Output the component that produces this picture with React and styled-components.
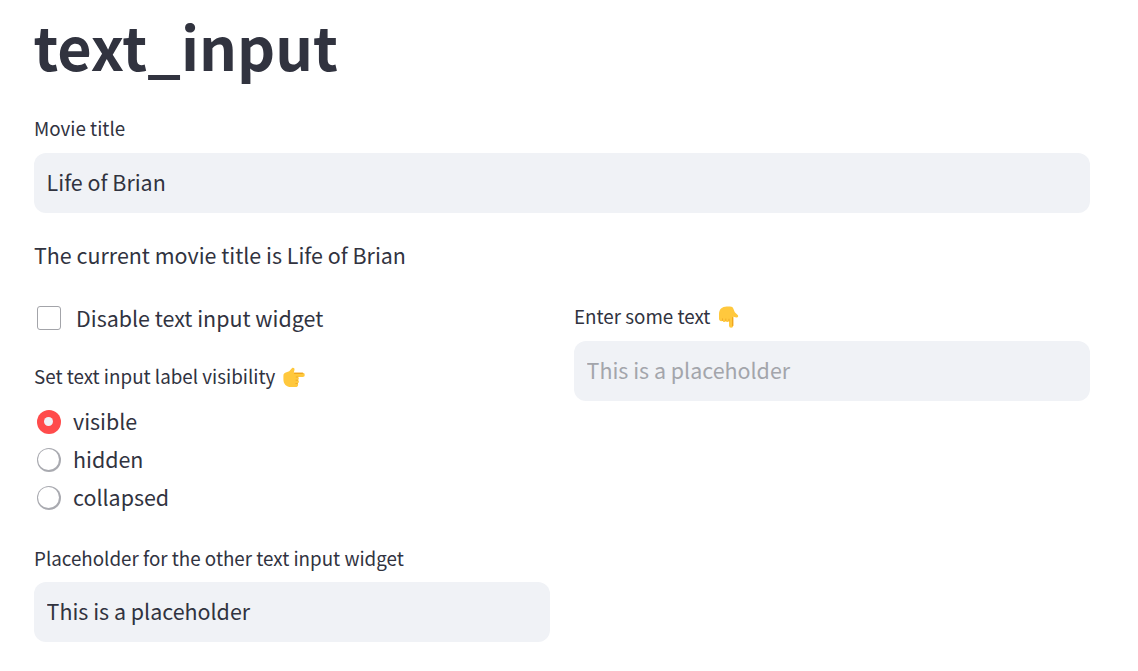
import React from "react";
import styled, { createGlobalStyle } from "styled-components";

const Global = createGlobalStyle`
  * { box-sizing: border-box; }
  body { margin: 0; background: #fff; color: #31333f; font-family: "Noto Sans CJK SC", "Open Sans", sans-serif; }
`;

const Page = styled.main`
  width: 1138px;
  height: 671px;
  overflow: hidden;
  padding: 0 48px 0 34px;
`;
const Title = styled.h1`
  margin: 0 0 0 -0.5px;
  height: 112px;
  padding-top: 5px;
  font-size: 59.3px;
  font-weight: 700;
  line-height: 80px;
`;
const Label = styled.div`
  display: flex;
  align-items: center;
  gap: 8px;
  height: 34px;
  font-size: 18.8px;
  line-height: 30px;
  padding-bottom: ${(p) => (p.$low ? 1 : 3)}px;
  white-space: nowrap;
`;
const Input = styled.input`
  display: block;
  width: 100%;
  height: 60px;
  margin-top: 7px;
  padding: 0 12.6px 3px;
  border: 0;
  border-radius: 12px;
  background: #f0f2f6;
  color: #31333f;
  font: 21.45px "Noto Sans CJK SC", sans-serif;
  &::placeholder { color: #a3a5ab; opacity: 1; }
`;
const Text = styled.p`
  margin: 23px 0 0;
  font-size: 21.45px;
  line-height: 38px;
`;
const Columns = styled.div`
  display: grid;
  grid-template-columns: 516px 516px;
  gap: 24px;
  margin-top: 26px;
`;
const Option = styled.label`
  display: flex;
  align-items: center;
  gap: ${(p) => p.$gap}px;
  height: 38px;
  padding-left: 3px;
  font-size: 21.45px;
  line-height: 36px;
`;
const OptionText = styled.span`
  padding-bottom: 2px;
`;
const Box = styled.span`
  width: 24px;
  height: 24px;
  margin-bottom: 2px;
  border: 1px solid #a3a4a9;
  border-radius: 3px;
`;
const Radio = styled.span`
  display: flex;
  width: 24px;
  height: 24px;
  padding: ${(p) => (p.$on ? "7px" : "1px")};
  border-radius: 50%;
  background: ${(p) => (p.$on ? "#ff4b4b" : "#a9aab0")};
  &::after {
    content: "";
    width: ${(p) => (p.$on ? 9 : 21)}px;
    height: ${(p) => (p.$on ? 9 : 21)}px;
    border-radius: 50%;
    background: ${(p) => (p.$on ? "#f0f2f6" : "#fff")};
  }
`;
const Group = styled.div`
  margin-top: ${(p) => p.$top}px;
`;
const Choices = styled.div`
  margin-top: 9px;
`;
const HandIcon = styled.svg`
  flex: none;
  width: 22px;
  height: 22px;
  margin-top: 3px;
  transform: ${(p) => (p.$right ? "rotate(-90deg)" : "none")};
`;

function Hand({ right }) {
  return (
    <HandIcon viewBox="0 0 22 22" $right={right} role="img" aria-label={right ? "pointing right" : "pointing down"}>
      <path
        fill="#ffc83d"
        d="M1 8C1 3.2 4 .4 8.8 .4H12C14 .4 14.8 1.2 15.4 2.8L16.8 6.2L19.7 8.9C20.8 10 19.9 11.8 18.3 11.5L15.2 10.8V19.7A2.1 2.1 0 0 1 11 19.7V14.9C10.5 16.2 8.3 16.2 7.9 14.9C7.2 16.4 5 16.2 4.6 14.7C3.2 15.8 1 14.8 1 12.8Z"
      />
      <path
        fill="none"
        stroke="#e59a1c"
        strokeWidth=".6"
        strokeLinecap="round"
        d="M4.5 12.8V14.5M7.8 13V14.8M11 13.2V15"
      />
      <path fill="none" stroke="#e8920c" strokeWidth=".9" strokeLinecap="round" d="M14.8 11.5V19.5" />
    </HandIcon>
  );
}

export default function App() {
  return (
    <Page>
      <Global />
      <Title>text_input</Title>
      <Label>Movie title</Label>
      <Input defaultValue="Life of Brian" />
      <Text>The current movie title is Life of Brian</Text>
      <Columns>
        <div>
          <Option $gap={15}><Box /><OptionText>Disable text input widget</OptionText></Option>
          <Group $top={22}>
            <Label>Set text input label visibility <Hand right /></Label>
            <Choices>
              <Option $gap={12}><Radio $on /><OptionText>visible</OptionText></Option>
              <Option $gap={12}><Radio /><OptionText>hidden</OptionText></Option>
              <Option $gap={12}><Radio /><OptionText>collapsed</OptionText></Option>
            </Choices>
          </Group>
          <Group $top={24}>
            <Label $low>Placeholder for the other text input widget</Label>
            <Input defaultValue="This is a placeholder" />
          </Group>
        </div>
        <div>
          <Label>Enter some text <Hand /></Label>
          <Input placeholder="This is a placeholder" />
        </div>
      </Columns>
    </Page>
  );
}
